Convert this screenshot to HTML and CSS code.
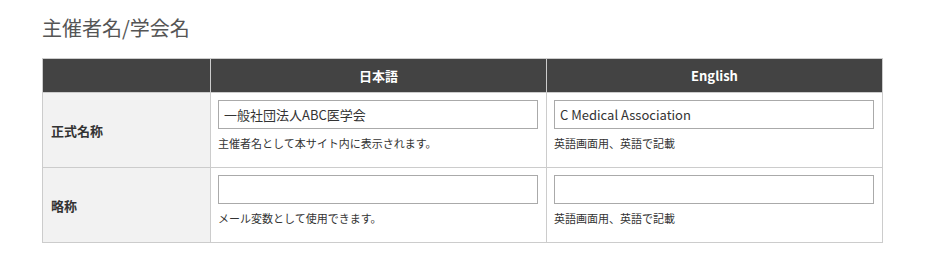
FILE: index.html
```html
<!DOCTYPE html>
<html lang="ja">
<head>
  <meta charset="UTF-8">
  <meta name="viewport" content="width=device-width, initial-scale=1.0">
  <title>主催者名/学会名</title>
  <link rel="stylesheet" href="styles.css">
</head>
<body>

<div class="section">
  <h2 class="section-title">主催者名/学会名</h2>

  <!-- Organizer name settings -->
  <table class="form-table">
    <colgroup>
      <col class="col-label">
      <col class="col-ja">
      <col class="col-en">
    </colgroup>
    <thead>
      <tr>
        <th></th>
        <th>日本語</th>
        <th>English</th>
      </tr>
    </thead>
    <tbody>
      <tr>
        <th class="row-label">正式名称</th>
        <td>
          <input type="text" class="text-input" value="一般社団法人ABC医学会">
          <p class="help">主催者名として本サイト内に表示されます。</p>
        </td>
        <td>
          <input type="text" class="text-input" value="C Medical Association">
          <p class="help">英語画面用、英語で記載</p>
        </td>
      </tr>
      <tr>
        <th class="row-label">略称</th>
        <td>
          <input type="text" class="text-input" value="">
          <p class="help">メール変数として使用できます。</p>
        </td>
        <td>
          <input type="text" class="text-input" value="">
          <p class="help">英語画面用、英語で記載</p>
        </td>
      </tr>
    </tbody>
  </table>
</div>

</body>
</html>
```

FILE: styles.css
```css
/* Basic page styling */
body {
  margin: 0;
  font-family: "Noto Sans CJK JP", "Noto Sans", sans-serif;
  color: #333;
  background-color: #fff;
}

.section {
  padding: 0 42px;
}

.section-title {
  margin: 13px 0 15px;
  font-size: 20px;
  font-weight: normal;
  line-height: 30px;
  color: #555;
}

/* Form table */
.form-table {
  width: 841px;
  border-collapse: collapse;
  table-layout: fixed;
}

.col-label {
  width: 168px;
}

.col-ja {
  width: 336px;
}

.form-table th,
.form-table td {
  border: 1px solid #ccc;
}

.form-table thead th {
  height: 33px;
  padding: 0;
  background-color: #434343;
  color: #fff;
  font-size: 13px;
  font-weight: bold;
  text-align: center;
}

.row-label {
  padding: 0 8px;
  background-color: #f2f2f2;
  font-size: 13px;
  font-weight: bold;
  text-align: left;
  vertical-align: middle;
}

.form-table td {
  padding: 7px 7px 16px;
  vertical-align: top;
}

.text-input {
  display: block;
  box-sizing: border-box;
  width: 320px;
  height: 29px;
  margin: 0;
  padding: 0 5px;
  border: 1px solid #aaa;
  font-family: "Noto Sans CJK JP", "Noto Sans", sans-serif;
  font-size: 13px;
  color: #333;
}

.help {
  margin: 6px 0 0;
  font-size: 11px;
  line-height: 16px;
  color: #333;
}
```
